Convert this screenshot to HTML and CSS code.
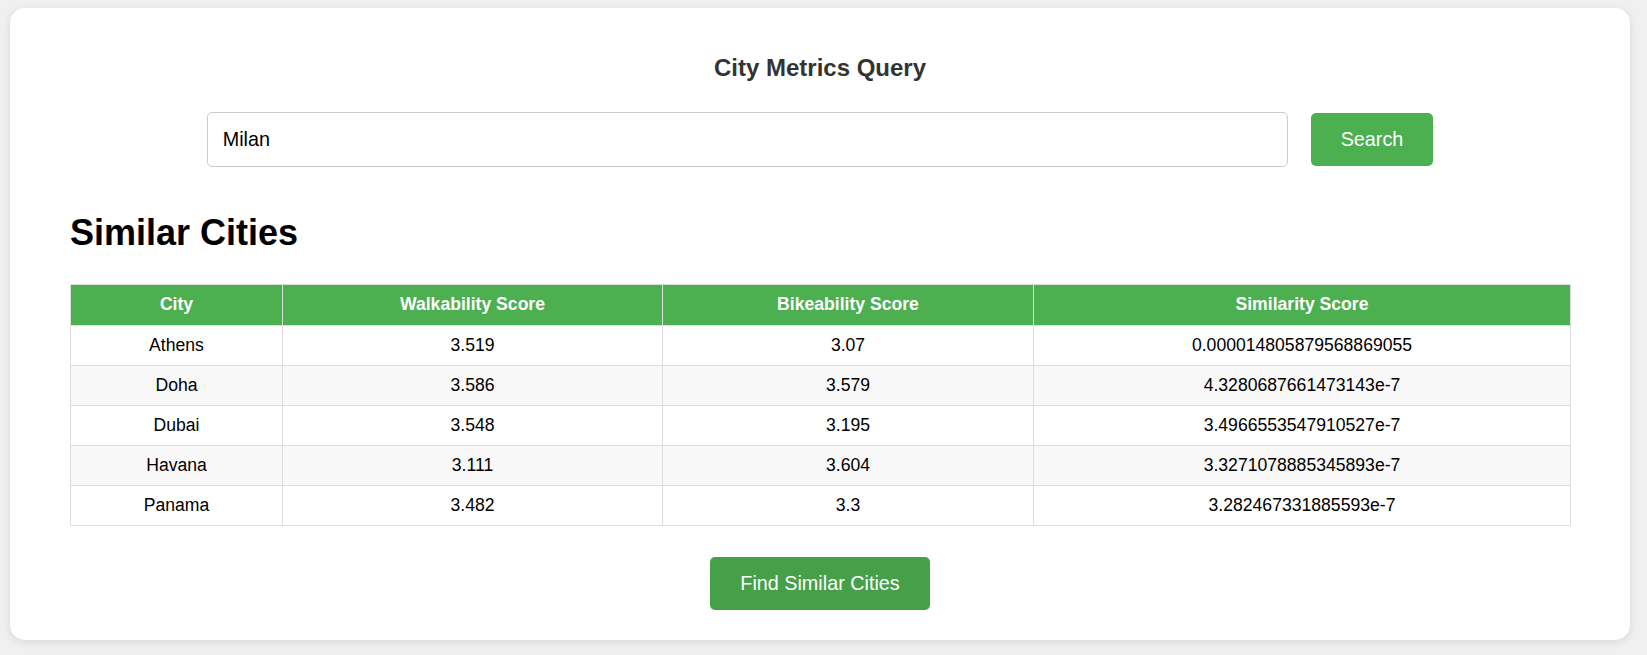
FILE: index.html
```html
<!DOCTYPE html>
<html lang="en">
<head>
<meta charset="utf-8">
<title>City Metrics Query</title>
<link rel="stylesheet" href="styles.css">
</head>
<body>
<div class="card">
  <h1 class="title">City Metrics Query</h1>
  <div class="search-row">
    <input class="search-input" type="text" value="Milan">
    <button class="btn btn-search">Search</button>
  </div>
  <h2 class="section-title">Similar Cities</h2>
  <table class="results">
    <colgroup>
      <col class="col-city">
      <col class="col-walk">
      <col class="col-bike">
      <col class="col-sim">
    </colgroup>
    <thead>
      <tr><th>City</th><th>Walkability Score</th><th>Bikeability Score</th><th>Similarity Score</th></tr>
    </thead>
    <tbody>
      <tr><td>Athens</td><td>3.519</td><td>3.07</td><td>0.000014805879568869055</td></tr>
      <tr><td>Doha</td><td>3.586</td><td>3.579</td><td>4.3280687661473143e-7</td></tr>
      <tr><td>Dubai</td><td>3.548</td><td>3.195</td><td>3.4966553547910527e-7</td></tr>
      <tr><td>Havana</td><td>3.111</td><td>3.604</td><td>3.3271078885345893e-7</td></tr>
      <tr><td>Panama</td><td>3.482</td><td>3.3</td><td>3.282467331885593e-7</td></tr>
    </tbody>
  </table>
  <div class="actions">
    <button class="btn btn-find">Find Similar Cities</button>
  </div>
</div>
</body>
</html>
```
FILE: styles.css
```css
html, body {
  margin: 0;
  background: #f0f0f0;
  font-family: "Liberation Sans", Arial, sans-serif;
}
body {
  padding: 8px 17px 17px 10px;
}
.card {
  background: #fff;
  border-radius: 15px;
  box-shadow: 0 2px 10px rgba(0, 0, 0, 0.1);
  padding: 46px 60px 30px;
}
.title {
  margin: 0;
  text-align: center;
  font-size: 24px;
  line-height: 28px;
  font-weight: bold;
  color: #333;
}
.search-row {
  margin-top: 30px;
  display: flex;
  justify-content: center;
  align-items: center;
  gap: 23px;
}
.search-input {
  box-sizing: border-box;
  width: 1081px;
  height: 55px;
  padding: 0 15px;
  border: 1px solid #ccc;
  border-radius: 5px;
  font-family: "Liberation Sans", Arial, sans-serif;
  font-size: 19.8px;
  color: #000;
  outline: none;
}
.btn {
  border: none;
  border-radius: 5px;
  color: #fff;
  font-family: "Liberation Sans", Arial, sans-serif;
  font-size: 19.8px;
  line-height: 23px;
  padding: 15px 30px;
  cursor: pointer;
}
.btn-search {
  background: #4caf50;
}
.btn-find {
  background: #45a049;
}
.section-title {
  margin: 46px 0 0;
  font-size: 36px;
  line-height: 40px;
  font-weight: bold;
  color: #000;
}
.results {
  margin-top: 31px;
  width: 100%;
  border-collapse: collapse;
  table-layout: fixed;
  font-size: 17.6px;
}
.col-city { width: 212px; }
.col-walk { width: 380px; }
.col-bike { width: 371px; }
.col-sim { width: 537px; }
.results th,
.results td {
  border: 1px solid #ddd;
  padding: 10px 8px;
  line-height: 19px;
  text-align: center;
}
.results th {
  padding-bottom: 11px;
  background: #4caf50;
  color: #fff;
  font-weight: bold;
}
.results td {
  color: #000;
}
.results tbody tr:nth-child(even) {
  background: #f8f8f8;
}
.actions {
  margin-top: 31px;
  display: flex;
  justify-content: center;
}
```
